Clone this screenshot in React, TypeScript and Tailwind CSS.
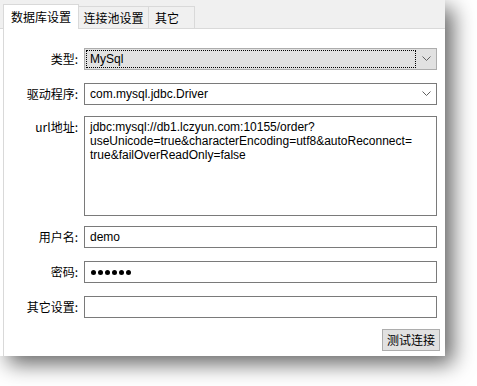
const cjk = "font-['Noto_Sans_CJK_SC',sans-serif]";
const latin = "font-['Liberation_Sans','Noto_Sans_CJK_SC',sans-serif]";

function Chevron() {
  return (
    <svg width="9" height="6" viewBox="0 0 9 6" className="shrink-0">
      <path d="M0.5 0.5 L4.5 4.5 L8.5 0.5" fill="none" stroke="#606060" strokeWidth="1" />
    </svg>
  );
}

function Row({ label, top, children, alignTop }: { label: string; top: string; children: React.ReactNode; alignTop?: boolean }) {
  return (
    <div className={`flex ${alignTop ? 'items-start' : 'items-center'} ${top}`}>
      <div className={`w-[74px] text-right text-[12px] leading-[14px] text-black ${cjk} ${alignTop ? 'mt-[4px]' : ''}`}>
        {label}
      </div>
      <div className="ml-[6px] w-[353px]">{children}</div>
    </div>
  );
}

export default function App() {
  return (
    <div className="w-[477px] h-[386px] bg-white overflow-hidden">
      <div className="w-[445px] h-[356px] bg-white shadow-[8px_8px_20px_rgba(0,0,0,0.6)] flex flex-col">
        {/* Tabs */}
        <div className="h-[29px] flex items-end bg-[#f0f0f0] border-b border-[#d9d9d9] pl-[3px]">
          <div className={`h-[25px] mb-[-1px] w-[76px] bg-white border border-b-0 border-[#d9d9d9] flex items-center justify-center text-[12px] text-black ${cjk}`}>
            数据库设置
          </div>
          <div className={`h-[22px] w-[70px] border-t border-r border-[#d9d9d9] flex items-center justify-center text-[12px] text-black ${cjk}`}>
            连接池设置
          </div>
          <div className={`h-[22px] w-[46px] border-t border-r border-[#d9d9d9] flex items-center pl-[6px] text-[12px] text-black ${cjk}`}>
            其它
          </div>
        </div>

        {/* Page */}
        <div className="flex-1 ml-[3px] border-l border-[#d9d9d9] flex flex-col">
          <Row label="类型:" top="mt-[19px]">
            <div className="h-[22px] bg-[#e1e1e1] border border-[#adadad] flex items-center pr-[5px]">
              <div className={`ml-[1px] h-[18px] w-[330px] border border-dotted border-black flex items-center pl-[3px] text-[12px] text-black ${latin}`}>
                MySql
              </div>
              <div className="flex-1" />
              <Chevron />
            </div>
          </Row>
          <Row label="驱动程序:" top="mt-[13px]">
            <div className={`h-[22px] bg-white border border-[#7a7a7a] flex items-center pl-[5px] pr-[5px] text-[12px] text-black ${latin}`}>
              <span className="flex-1">com.mysql.jdbc.Driver</span>
              <Chevron />
            </div>
          </Row>
          <Row label="url地址:" top="mt-[11px]" alignTop>
            <div className={`h-[100px] bg-white border border-[#7a7a7a] pl-[5px] pt-[3px] text-[12px] leading-[14px] text-black ${latin}`}>
              <div>jdbc:mysql://db1.lczyun.com:10155/order?</div>
              <div>useUnicode=true&amp;characterEncoding=utf8&amp;autoReconnect=</div>
              <div>true&amp;failOverReadOnly=false</div>
            </div>
          </Row>
          <Row label="用户名:" top="mt-[10px]">
            <div className={`h-[22px] bg-white border border-[#7a7a7a] flex items-center pl-[5px] text-[12px] text-black ${latin}`}>
              demo
            </div>
          </Row>
          <Row label="密码:" top="mt-[13px]">
            <div className="h-[22px] bg-white border border-[#7a7a7a] flex items-center pl-[6px] gap-[2px]">
              {[0, 1, 2, 3, 4, 5].map((i) => (
                <span key={i} className="w-[5px] h-[5px] rounded-full bg-black" />
              ))}
            </div>
          </Row>
          <Row label="其它设置:" top="mt-[13px]">
            <div className="h-[22px] bg-white border border-[#7a7a7a]" />
          </Row>
          <div className="flex justify-end mt-[11px] pr-[5px]">
            <button className={`h-[22px] w-[58px] bg-[#e1e1e1] border border-[#adadad] flex items-center justify-center text-[12px] text-black ${cjk}`}>
              测试连接
            </button>
          </div>
        </div>
      </div>
    </div>
  );
}
